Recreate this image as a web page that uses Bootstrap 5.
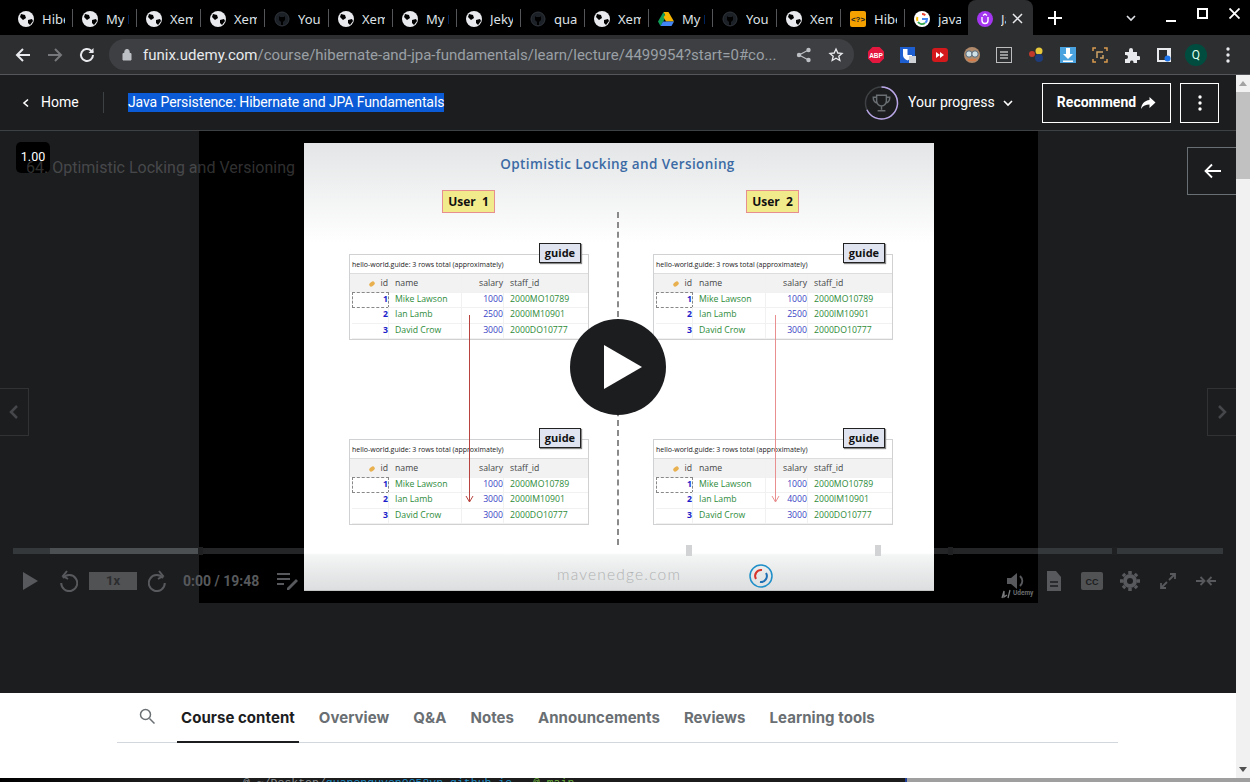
<!DOCTYPE html>
<html lang="en">
<head>
  <meta charset="UTF-8">
  <title>Java Persistence: Hibernate and JPA Fundamentals</title>
  <link rel="stylesheet" href="https://cdn.jsdelivr.net/npm/bootstrap@5.3.0/dist/css/bootstrap.min.css">
  <style>
    html, body { height: 782px; overflow: hidden; }
    body { background: #000; font-family: Roboto, "Liberation Sans", sans-serif; }
    svg { display: block; flex: none; }

    /* browser chrome */
    .tab-strip { height: 35px; background: #000; padding-left: 9px; }
    .tab-item { width: 64px; height: 35px; padding-left: 9px; padding-top: 2px; color: #dee1e6; font: 13px "Noto Sans", sans-serif; background: linear-gradient(#55565a, #55565a) right 50% / 1px 18px no-repeat; overflow: hidden; white-space: nowrap; }
    .tab-item:nth-child(15) { background: none; }
    .tab-item span { width: 23px; margin-left: 8px; overflow: hidden; }
    .tab-item.tab-current { background: #2d2e30; border-radius: 8px 8px 0 0; margin-left: -1px; width: 65px; }
    .tab-item.tab-current span { width: 5px; }
    .tab-x { margin-left: 6px; }
    .tab-plus { margin-left: 15px; }
    .win-btns { margin-left: auto; color: #fff; }
    .win-min { margin-left: 29px; }
    .win-max { margin: 0 0 8px 21px; }
    .win-close { margin: 0 10px 8px 21px; }
    .tool-bar { height: 40px; background: #2d2e30; border-bottom: 1px solid #55565a; padding-left: 14px; }
    .nav-ico { width: 18px; margin-right: 14px; }
    .nav-ico.nav-last { margin-right: 13px; }
    .omni { width: 745px; height: 31px; background: #3e3f42; border-radius: 16px; padding: 0 10px 0 13px; font: 15px Roboto, sans-serif; color: #9aa0a6; white-space: nowrap; }
    .omni b { font-weight: 400; color: #e8eaed; }
    .omni-lock { margin-right: 11px; }
    .ext-row { margin-left: 6px; }
    .ext-slot { width: 32px; display: flex; justify-content: center; }
    .avatar-q { width: 22px; height: 22px; border-radius: 50%; background: #004d40; color: #dfe; font-size: 12px; display: flex; align-items: center; justify-content: center; }

    /* page area + scrollbar */
    .page-wrap { height: 703px; }
    .page-main { width: 1236px; }
    .scroll-rail { width: 14px; background: #f1f1f1; position: relative; padding: 6px 0; }
    .scroll-thumb { position: absolute; top: 17px; left: 0; width: 100%; height: 87px; background: #c1c1c1; }
    .scroll-up { width: 0; height: 0; border: 4px solid transparent; border-top: 0; border-bottom: 5px solid #a3a3a3; }
    .scroll-down { width: 0; height: 0; border: 4px solid transparent; border-bottom: 0; border-top: 5px solid #505050; }

    .course-head { height: 56px; background: #1c1d1f; border-bottom: 1px solid #3e4143; padding-left: 21px; color: #fff; font-size: 14px; }
    .home-link { width: 82px; gap: 10px; }
    .head-rule { width: 1px; height: 21px; background: #3e4143; margin-right: 24px; }
    .sel-title { background: #0b5bd6; line-height: 19px; white-space: nowrap; letter-spacing: -.1px; }
    .head-end { margin-left: auto; padding-right: 17px; }
    .ring-ico { margin-left: 1px; }
    .prog-label { width: 87px; margin: 0 7px 0 9px; white-space: nowrap; }
    .outline-sq { height: 40px; border: 1px solid #fff; display: flex; align-items: center; justify-content: center; font-weight: 700; }
    .btn-rec { width: 129px; margin-left: 28px; gap: 4px; }
    .btn-more { width: 39px; margin-left: 9px; }

    /* player */
    .player { height: 562px; background: #1c1d1f; position: relative; overflow: hidden; }
    .video-box { position: absolute; left: 199px; top: 0; width: 839px; height: 472px; background: #000; }
    .slide { position: absolute; left: 304px; top: 12px; width: 630px; height: 448px; background: linear-gradient(#e3e5e6 0, #fff 100px, #fff 410px, #f4f5f5 412px, #dcdedf 447px, #aaa 448px); font-family: "Open Sans", sans-serif; }
    .slide-title { position: absolute; left: 0; right: 0; top: 11px; padding-right: 3px; text-align: center; color: #3b6aa5; font-size: 13.5px; font-weight: 600; letter-spacing: .4px; line-height: 20px; }
    .user-tag { position: absolute; top: 47px; width: 53px; height: 23px; background: #f2eb8b; border: 1px solid #e78f8f; color: #111; font-size: 12px; font-weight: 700; display: flex; align-items: center; justify-content: center; }
    .user-a { left: 138px; }
    .user-b { left: 442px; }
    .grid-box { position: absolute; width: 240px; height: 86px; background: #fff; border: 1px solid #cfd1d3; color: #222; font-size: 8.7px; }
    .grid-cap { height: 18px; line-height: 19px; padding-left: 2px; white-space: nowrap; font-size: 7px; }
    .grid-line { display: grid; grid-template-columns: 37px 73px 42px 1fr; height: 15.4px; line-height: 15.4px; padding-left: 2px; }
    .grid-line div { border-right: 1px solid #f1f1f1; border-bottom: 1px solid #f1f1f1; }
    .grid-line.grid-hd { height: 19px; line-height: 18px; background: #f2f2f3; color: #444; border-top: 1px solid #ddd; }
    .grid-line div:nth-child(1), .grid-line div:nth-child(3) { text-align: right; }
    .grid-line div:nth-child(2), .grid-line div:nth-child(4) { padding-left: 6px; }
    .grid-line div:nth-child(4) { border-right: 0; }
    .cell-n { color: #1c1ec9; font-weight: 700; }
    .cell-focus { border: 1px dashed #888 !important; line-height: 13px; }
    .cell-g { color: #2e8b3a; }
    .cell-b { color: #3a3fc4; }
    .key-dot { display: inline-block; width: 6px; height: 4px; margin-right: 5px; border-radius: 2px; background: #e8b04e; transform: rotate(-35deg); }
    .guide-tag { position: absolute; top: -12px; right: 7px; width: 42px; height: 20px; background: #dfe4f0; border: 1px solid #222; box-shadow: 1px 1px 1px #888; color: #111; font-weight: 700; font-size: 11px; display: flex; align-items: center; justify-content: center; }
    .mid-dash { position: absolute; left: 313px; top: 69px; height: 333px; border-left: 2px dashed #8a8a8a; }
    .red-arrow { position: absolute; top: 172px; }
    .brand-text { position: absolute; left: 253px; top: 420px; color: #b0b2b3; font-size: 15.5px; font-weight: 300; letter-spacing: 1.2px; font-family: Lato, sans-serif; }
    .slide-logo { position: absolute; left: 445px; top: 421px; }

    .speed-chip { position: absolute; left: 16px; top: 11px; width: 34px; height: 31px; border-radius: 5px; background: #000; color: #fff; font-size: 12.5px; text-align: center; line-height: 30px; }
    .lec-name { position: absolute; left: 26px; top: 25px; color: rgba(255,255,255,.2); font-size: 16px; white-space: nowrap; }
    .side-btn { position: absolute; border: 1px solid #303234; display: flex; align-items: center; justify-content: center; }
    .side-prev { left: -1px; top: 257px; width: 30px; height: 48px; }
    .side-next { right: -1px; top: 257px; width: 30px; height: 48px; }
    .side-back { right: -2px; top: 16px; width: 51px; height: 48px; border-color: #6a6f73; }
    .big-play { position: absolute; left: 570px; top: 188px; width: 96px; height: 96px; border-radius: 50%; background: #1c1d1f; display: flex; align-items: center; justify-content: center; }
    .big-play svg { margin-left: 10px; }
    .seek-bar { position: absolute; left: 13px; top: 417px; width: 1210px; height: 6px; background: rgba(106,111,115,.33); }
    .seek-load { position: absolute; left: 37px; top: 0; width: 150px; height: 100%; background: rgba(106,111,115,.45); }
    .seek-mark { position: absolute; top: -1px; width: 5px; height: 8px; background: #1f2021; }
    .seek-over { position: absolute; left: 13px; top: 417px; }
    .seek-mark.on-white { top: -3px; width: 6px; height: 11px; background: #d2d3d4; }
    .ctrl-row { position: absolute; left: 0; right: 0; top: 437px; height: 26px; padding: 0 11px 0 21px; color: #57595c; }
    .ctrl-replay { margin-left: 19px; }
    .ctrl-rate { width: 48px; height: 18px; background: #505254; color: #2c2d2f; font-size: 13px; font-weight: 700; text-align: center; line-height: 18px; margin: 0 11px; }
    .ctrl-time { font-size: 14px; font-weight: 700; white-space: nowrap; margin-left: 15px; width: 77px; }
    .ctrl-notes { margin-left: 16px; }
    .ctrl-slot { width: 38px; display: flex; justify-content: center; }
    .udemy-mark { position: absolute; left: 1001px; top: 458px; gap: 2px; color: #6a6c6e; font-size: 6.5px; font-weight: 700; }

    /* lower tabs */
    .tab-panel { height: 85px; background: #fff; padding: 0 117px; }
    .tab-row { height: 50px; border-bottom: 1px solid #d1d7dc; width: 1001px; }
    .tab-find { width: 60px; padding-left: 22px; margin-bottom: 3px; }
    .tab-link { padding: 0 4px; height: 50px; margin-right: 16px; line-height: 49px; color: #6a6f73; font-family: Inter, sans-serif; font-weight: 700; font-size: 15px; letter-spacing: .05px; white-space: nowrap; }
    .tab-link.tab-on { color: #1c1d1f; border-bottom: 2px solid #1c1d1f; }

    /* strip of the desktop below the window */
    .desk-peek { height: 4px; background: linear-gradient(90deg, #000 0, #1c1c1c 150px, #1c1c1c 905px, #1f3f9a 905px, #1f3f9a 907px, #9f9f9f 907px); overflow: hidden; font: 11.5px/10px "Liberation Mono", monospace; color: #8a8f93; padding-left: 243px; white-space: pre; }
    .term-path { color: #1f8fc9; }
    .term-branch { color: #6cb33f; }
  </style>
</head>
<body>

<div class="tab-strip d-flex align-items-center" id="tabs"></div>

<div class="tool-bar d-flex align-items-center">
  <svg class="nav-ico" viewBox="0 0 18 18" height="18" fill="none" stroke="#e8eaed" stroke-width="2"><path d="M16 9H3M9 3 3 9l6 6"/></svg>
  <svg class="nav-ico" viewBox="0 0 18 18" height="18" fill="none" stroke="#77787b" stroke-width="2"><path d="M2 9h13M9 3l6 6-6 6"/></svg>
  <svg class="nav-ico nav-last" viewBox="0 0 18 18" height="18" fill="none" stroke="#e8eaed" stroke-width="2"><path d="M15 9a6 6 0 1 1-1.800-4.300L15 6.500"/><path d="M15.500 2v5h-5" fill="#e8eaed" stroke="none"/></svg>
  <div class="omni d-flex align-items-center">
    <svg width="10" height="13" viewBox="0 0 10 13" class="omni-lock"><path d="M1 5.500h8V12H1zM2.800 5.500V3.600a2.200 2.200 0 0 1 4.400 0v1.900" fill="#bdc1c6" stroke="#bdc1c6"/></svg>
    <span><b>funix.udemy.com</b>/course/hibernate-and-jpa-fundamentals/learn/lecture/4499954?start=0#co...</span>
    <svg class="ms-auto me-3" width="16" height="16" viewBox="0 0 16 16" fill="#bdc1c6"><circle cx="12.500" cy="3" r="2.200"/><circle cx="12.500" cy="13" r="2.200"/><circle cx="3" cy="8" r="2.200"/><path d="M3 8l9.500-5M3 8l9.500 5" stroke="#bdc1c6" stroke-width="1.200"/></svg>
    <svg width="16" height="16" viewBox="0 0 24 24" fill="none" stroke="#e8eaed" stroke-width="2"><path d="m12 3 2.700 6 6.300.6-4.800 4.200 1.500 6.400L12 16.800l-5.700 3.400 1.500-6.400L3 9.600 9.300 9z"/></svg>
  </div>
  <div class="ext-row d-flex align-items-center">
    <div class="ext-slot"><svg width="18" height="18" viewBox="0 0 18 18"><path d="M5.500 1h7L17 5.500v7L12.500 17h-7L1 12.500v-7z" fill="#e4173e"/><text x="9" y="11.500" font-size="6.500" font-weight="700" text-anchor="middle" fill="#fff" font-family="Liberation Sans">ABP</text></svg></div>
    <div class="ext-slot"><svg width="18" height="18" viewBox="0 0 18 18"><rect x="1" y="1" width="15" height="16" fill="#1d5fd0"/><path d="M4 3h9v6c0 3-2.500 4.500-4.500 5.500C6.500 13.500 4 12 4 9z" fill="#fff"/><path d="M8.500 3h4.500v6H8.500z" fill="#1d5fd0"/><rect x="10" y="10" width="7" height="7" fill="#cfd2d6"/></svg></div>
    <div class="ext-slot"><svg width="16" height="14" viewBox="0 0 16 14"><rect width="16" height="14" rx="3" fill="#d3191c"/><path d="M4 4l4 3-4 3zM8 4l4 3-4 3z" fill="#fff"/></svg></div>
    <div class="ext-slot"><svg width="18" height="18" viewBox="0 0 18 18"><circle cx="9" cy="9" r="8" fill="#b08a6a"/><circle cx="6" cy="8" r="3.200" fill="#cfe0e6" stroke="#567"/><circle cx="12" cy="8" r="3.200" fill="#cfe0e6" stroke="#567"/><path d="M5 14h8" stroke="#d67a4a" stroke-width="2"/></svg></div>
    <div class="ext-slot"><svg width="16" height="16" viewBox="0 0 16 16" fill="none" stroke="#bdbdbd"><rect x=".5" y=".5" width="15" height="15"/><path d="M4 5h8M4 8h8M4 11h8" stroke-width="1.500"/></svg></div>
    <div class="ext-slot"><svg width="16" height="16" viewBox="0 0 16 16"><circle cx="4" cy="7" r="3" fill="#c0392b"/><circle cx="11" cy="4" r="3.500" fill="#e8c93c"/><circle cx="11" cy="11" r="4" fill="#1f3c78"/></svg></div>
    <div class="ext-slot"><svg width="16" height="16" viewBox="0 0 16 16"><rect width="16" height="16" fill="#4aa3df"/><path d="M6 1h4v6h3l-5 5-5-5h3zM3 13.500h10V15H3z" fill="#fff"/></svg></div>
    <div class="ext-slot"><svg width="16" height="16" viewBox="0 0 16 16" fill="none" stroke="#d79a4e" stroke-width="1.500"><path d="M1 4V1h3M12 1h3v3M15 12v3h-3M4 15H1v-3"/><path d="M5 11V5h6M11 8v3H8" stroke="#cfa466"/></svg></div>
    <div class="ext-slot"><svg width="16" height="16" viewBox="0 0 16 16" fill="#e8eaed"><path d="M1 5h4V3a2 2 0 0 1 4 0v2h4v4h1.500a2 2 0 0 1 0 4H13v3H9.500v-1a1.800 1.800 0 0 0-3.500 0v1H1v-4h1a2 2 0 0 0 0-4H1z"/></svg></div>
    <div class="ext-slot"><svg width="16" height="16" viewBox="0 0 16 16"><rect x="1" y="1" width="14" height="14" fill="#e8eaed"/><rect x="3" y="3" width="8" height="10" fill="#2d2e30"/><circle cx="11.500" cy="11.500" r="3" fill="#1a73e8"/></svg></div>
    <div class="ext-slot"><div class="avatar-q">Q</div></div>
    <div class="ext-slot"><svg width="4" height="16" viewBox="0 0 4 16" fill="#e8eaed"><circle cx="2" cy="2" r="1.700"/><circle cx="2" cy="8" r="1.700"/><circle cx="2" cy="14" r="1.700"/></svg></div>
  </div>
</div>

<div class="page-wrap d-flex">
  <div class="page-main">
    <div class="course-head d-flex align-items-center">
      <div class="home-link d-flex align-items-center">
        <svg width="10" height="10" viewBox="0 0 10 10" fill="none" stroke="#fff" stroke-width="1.600"><path d="M7 1.500 3 5l4 3.500"/></svg>
        <span>Home</span>
      </div>
      <div class="head-rule"></div>
      <span class="sel-title">Java Persistence: Hibernate and JPA Fundamentals</span>
      <div class="head-end d-flex align-items-center">
        <svg class="ring-ico" width="35" height="36" viewBox="0 0 36 36" fill="none"><circle cx="18" cy="18" r="16.500" stroke="#3e4143" stroke-width="1.500"/><path d="M18 1.500A16.500 16.500 0 1 1 3 25" stroke="#b9a6e8" stroke-width="1.500"/><path d="M13 10h10v6a5 5 0 0 1-10 0zM13 12H9.500c0 4 2 5.500 4 6M23 12h3.500c0 4-2 5.500-4 6M18 21v4M14 26h8" stroke="#6a6f73" stroke-width="1.500"/></svg>
        <span class="prog-label">Your progress</span>
        <svg width="12" height="12" viewBox="0 0 12 12" fill="none" stroke="#fff" stroke-width="1.600"><path d="M2 4l4 4 4-4"/></svg>
        <div class="outline-sq btn-rec"><span>Recommend</span><svg width="16" height="14" viewBox="0 0 16 14" fill="#fff"><path d="M9.500 1 15.500 6.500 9.500 12V8.500C6 8.500 3 9.500 1 13 1.500 8 4.500 4.500 9.500 4z"/></svg></div>
        <div class="outline-sq btn-more"><svg width="4" height="16" viewBox="0 0 4 16" fill="#fff"><circle cx="2" cy="2" r="1.700"/><circle cx="2" cy="8" r="1.700"/><circle cx="2" cy="14" r="1.700"/></svg></div>
      </div>
    </div>

    <div class="player">
      <div class="video-box"></div>

      <div class="speed-chip">1.00</div>
      <div class="lec-name">64. Optimistic Locking and Versioning</div>
      <div class="side-btn side-back"><svg width="18" height="16" viewBox="0 0 18 16" fill="none" stroke="#fff" stroke-width="1.800"><path d="M17 8H2M8 1.500 1.500 8 8 14.500"/></svg></div>
      <div class="side-btn side-prev"><svg width="10" height="16" viewBox="0 0 10 16" fill="none" stroke="#45474a" stroke-width="2.500"><path d="M8 2 2 8l6 6"/></svg></div>
      <div class="side-btn side-next"><svg width="10" height="16" viewBox="0 0 10 16" fill="none" stroke="#45474a" stroke-width="2.500"><path d="m2 2 6 6-6 6"/></svg></div>

      <div class="seek-bar">
        <div class="seek-load"></div>
        <div class="seek-mark" style="left:185px"></div>
        <div class="seek-mark" style="left:935px"></div>
        <div class="seek-mark" style="left:1099px"></div>
      </div>

      <div class="ctrl-row d-flex align-items-center">
        <svg width="18" height="20" viewBox="0 0 18 20" fill="#57595c"><path d="M2 1l15 9-15 9z"/></svg>
        <svg class="ctrl-replay" width="20" height="22" viewBox="0 0 20 22" fill="none" stroke="#57595c" stroke-width="2"><path d="M5 8a8 8 0 1 1-1.800 5"/><path d="M9 1 5 6l5 3"/></svg>
        <div class="ctrl-rate">1x</div>
        <svg width="20" height="22" viewBox="0 0 20 22" fill="none" stroke="#57595c" stroke-width="2"><path d="M15 8a8 8 0 1 0 1.800 5"/><path d="M11 1l4 5-5 3"/></svg>
        <div class="ctrl-time">0:00 / 19:48</div>
        <svg class="ctrl-notes" width="22" height="20" viewBox="0 0 22 20" fill="#57595c"><rect x="1" y="2" width="13" height="2"/><rect x="1" y="7" width="13" height="2"/><rect x="1" y="12" width="7" height="2"/><path d="M11 17l9-9 2 2-9 9h-2z"/></svg>
        <div class="d-flex align-items-center ms-auto">
          <div class="ctrl-slot"><svg width="20" height="20" viewBox="0 0 20 20" fill="#57595c"><path d="M1 7h4l6-5v16l-6-5H1z"/><path d="M14 5c3 3 3 7 0 10" fill="none" stroke="#57595c" stroke-width="2"/></svg></div>
          <div class="ctrl-slot"><svg width="16" height="20" viewBox="0 0 16 20" fill="#57595c"><path d="M1 0h9l5 6v14H1z"/><path d="M4 11h8M4 15h8" stroke="#1c1d1f" stroke-width="1.500"/></svg></div>
          <div class="ctrl-slot"><svg width="22" height="18" viewBox="0 0 22 18"><rect width="22" height="18" rx="2" fill="#505254"/><text x="11" y="12.500" text-anchor="middle" font-size="9" font-weight="700" fill="#1c1d1f" font-family="Liberation Sans">CC</text></svg></div>
          <div class="ctrl-slot"><svg width="20" height="20" viewBox="0 0 20 20" fill="none" stroke="#57595c"><circle cx="10" cy="10" r="5" stroke-width="4"/><path d="M10 0v3M10 17v3M0 10h3M17 10h3M3 3l2 2M15 15l2 2M17 3l-2 2M5 15l-2 2" stroke-width="3.500"/></svg></div>
          <div class="ctrl-slot"><svg width="18" height="18" viewBox="0 0 18 18" fill="none" stroke="#57595c" stroke-width="1.800"><path d="M2 16 8 10M2 11v5h5M16 2l-6 6M11 2h5v5"/></svg></div>
          <div class="ctrl-slot"><svg width="20" height="12" viewBox="0 0 20 12" fill="none" stroke="#57595c" stroke-width="1.800"><path d="M0 6h8M4.500 2 8.500 6l-4 4M20 6h-8M15.500 2l-4 4 4 4"/></svg></div>
        </div>
      </div>
      <div class="udemy-mark d-flex align-items-center">
        <svg width="10" height="10" viewBox="0 0 10 10" fill="none" stroke="#7a7c7e" stroke-width="1.300"><path d="M1 9 3 2 3 8 6 6M9 1 7 9"/></svg>
        <span>Udemy</span>
      </div>

      <div class="slide" id="slide">
        <div class="slide-title">Optimistic Locking and Versioning</div>
        <div class="user-tag user-a">User&nbsp;&nbsp;1</div>
        <div class="user-tag user-b">User&nbsp;&nbsp;2</div>
        <div class="mid-dash"></div>
        <div class="brand-text">mavenedge.com</div>
        <svg class="slide-logo" width="24" height="24" viewBox="0 0 24 24" fill="none"><circle cx="12" cy="12" r="11" stroke="#1f8fc9" stroke-width="1.500"/><path d="M7 15a6 6 0 0 1 6-9" stroke="#d8342b" stroke-width="2"/><path d="M17 9a6 6 0 0 1-6 9" stroke="#1f6fb5" stroke-width="2"/></svg>
      </div>

      <div class="seek-over">
        <div class="seek-mark on-white" style="left:673px"></div>
        <div class="seek-mark on-white" style="left:862px"></div>
      </div>

      <div class="big-play"><svg width="38" height="44" viewBox="0 0 38 44" fill="#fff"><path d="M0 0l38 22L0 44z"/></svg></div>
    </div>

    <div class="tab-panel">
      <div class="tab-row d-flex align-items-center">
        <div class="tab-find"><svg width="16" height="16" viewBox="0 0 16 16" fill="none" stroke="#6a6f73" stroke-width="1.500"><circle cx="6.500" cy="6.500" r="5"/><path d="m10.500 10.500 5 5"/></svg></div>
        <div class="tab-link tab-on">Course content</div>
        <div class="tab-link">Overview</div>
        <div class="tab-link">Q&amp;A</div>
        <div class="tab-link">Notes</div>
        <div class="tab-link">Announcements</div>
        <div class="tab-link">Reviews</div>
        <div class="tab-link">Learning tools</div>
      </div>
    </div>
  </div>
  <div class="scroll-rail d-flex flex-column justify-content-between align-items-center"><div class="scroll-up"></div><div class="scroll-thumb"></div><div class="scroll-down"></div></div>
</div>
<div class="desk-peek">@ ~/Desktop/<span class="term-path">quanenguyen0058vn.github.io</span>  <span class="term-branch"> @ main</span></div>

<script>
const globe = '<svg width="16" height="16" viewBox="0 0 16 16"><circle cx="8" cy="8" r="8" fill="#e8eaed"/><path d="M3 3l4 1 1 3-3 2-3-3zM10 9l4-1 1 2-3 4-2-2z" fill="#000"/></svg>';
const cat = '<svg width="16" height="16" viewBox="0 0 16 16"><circle cx="8" cy="8" r="7" fill="#1c2128" stroke="#2f343a"/><path d="M5 5l1 1h4l1-1v4l-2 2v3H7v-3L5 9z" fill="#000"/></svg>';
const drive = '<svg width="16" height="16" viewBox="0 0 16 16"><path d="M5.500 1h5L8 6z" fill="#f4b400"/><path d="M5.500 1 0 10.500 2.500 15 8 6z" fill="#0f9d58"/><path d="M10.500 1 16 10.500H8L5.500 6z" fill="#f4b400"/><path d="M2.500 15h11l2.500-4.500H5z" fill="#4285f4"/></svg>';
const hib = '<svg width="16" height="16" viewBox="0 0 16 16"><rect width="16" height="16" rx="2" fill="#f5a100"/><text x="8" y="11" font-size="8" font-weight="700" text-anchor="middle" fill="#222" font-family="Liberation Sans">&lt;?&gt;</text></svg>';
const goog = '<svg width="16" height="16" viewBox="0 0 16 16"><circle cx="8" cy="8" r="8" fill="#fff"/><path d="M8 3a5 5 0 0 1 3.300 1.200" fill="none" stroke="#ea4335" stroke-width="2"/><path d="M3.500 6a5 5 0 0 0 0 4" fill="none" stroke="#fbbc05" stroke-width="2"/><path d="M4 11a5 5 0 0 0 7 1" fill="none" stroke="#34a853" stroke-width="2"/><path d="M8 8h5c0 1.500-.6 3-1.700 3.800" fill="none" stroke="#4285f4" stroke-width="2"/></svg>';
const ud = '<svg width="16" height="16" viewBox="0 0 16 16"><circle cx="8" cy="8" r="8" fill="#a435f0"/><path d="M5 6v3.500a3 3 0 0 0 6 0V6M6 4.500 8 3l2 1.500" fill="none" stroke="#fff" stroke-width="1.400"/></svg>';
const tabList = [
  [globe, 'Hibernate'], [globe, 'My Portal'], [globe, 'Xem bài'], [globe, 'Xem bài'], [cat, 'Your repo'],
  [globe, 'Xem bài'], [globe, 'My Portal'], [globe, 'Jekyll'], [cat, 'quanen'], [globe, 'Xem bài'],
  [drive, 'My Drive'], [cat, 'Your repo'], [globe, 'Xem bài'], [hib, 'Hibernate'], [goog, 'java']
];
let tabHtml = '';
tabList.forEach(t => {
  tabHtml += `<div class="tab-item d-flex align-items-center">${t[0]}<span>${t[1]}</span></div>`;
});
tabHtml += `<div class="tab-item tab-current d-flex align-items-center">${ud}<span>Java</span>
  <svg class="tab-x" width="11" height="11" viewBox="0 0 11 11" stroke="#e8eaed" stroke-width="1.500"><path d="M1 1l9 9M10 1l-9 9"/></svg></div>
  <svg class="tab-plus" width="14" height="14" viewBox="0 0 14 14" stroke="#fff" stroke-width="2"><path d="M7 0v14M0 7h14"/></svg>
  <div class="win-btns d-flex align-items-center">
    <svg width="12" height="12" viewBox="0 0 12 12" fill="none" stroke="#dee1e6" stroke-width="1.600"><path d="M2 4l4 4 4-4"/></svg>
    <svg class="win-min" width="10" height="10" viewBox="0 0 10 10" stroke="#fff" stroke-width="2"><path d="M0 8h10"/></svg>
    <svg class="win-max" width="11" height="11" viewBox="0 0 11 11" fill="none" stroke="#fff" stroke-width="2"><rect x="1" y="1" width="9" height="9"/></svg>
    <svg class="win-close" width="11" height="11" viewBox="0 0 11 11" stroke="#fff" stroke-width="1.800"><path d="M.5.500l10 10M10.500.500l-10 10"/></svg>
  </div>`;
document.getElementById('tabs').innerHTML = tabHtml;

// the four result grids on the slide: [left, top, salary of Ian Lamb]
const grids = [[45, 111, 2500], [349, 111, 2500], [45, 296, 3000], [349, 296, 4000]];
const slide = document.getElementById('slide');
grids.forEach(g => {
  const box = document.createElement('div');
  box.className = 'grid-box';
  box.style.left = g[0] + 'px';
  box.style.top = g[1] + 'px';
  box.innerHTML = `
    <div class="guide-tag">guide</div>
    <div class="grid-cap">hello-world.guide: 3 rows total (approximately)</div>
    <div class="grid-line grid-hd"><div><i class="key-dot"></i>id</div><div>name</div><div>salary</div><div>staff_id</div></div>
    <div class="grid-line"><div class="cell-n cell-focus">1</div><div class="cell-g">Mike Lawson</div><div class="cell-b">1000</div><div class="cell-g">2000MO10789</div></div>
    <div class="grid-line"><div class="cell-n">2</div><div class="cell-g">Ian Lamb</div><div class="cell-b">${g[2]}</div><div class="cell-g">2000IM10901</div></div>
    <div class="grid-line"><div class="cell-n">3</div><div class="cell-g">David Crow</div><div class="cell-b">3000</div><div class="cell-g">2000DO10777</div></div>`;
  slide.appendChild(box);
});
// red arrows between the grids: [left, colour]
[[161, '#b8433f'], [467, '#ea8f8f']].forEach(a => {
  slide.insertAdjacentHTML('beforeend', `<svg class="red-arrow" style="left:${a[0]}px" width="9" height="188" viewBox="0 0 9 188" fill="none" stroke="${a[1]}"><path d="M4.500 0v187M1 181l3.500 6 3.500-6"/></svg>`);
});
</script>
<script src="https://cdn.jsdelivr.net/npm/bootstrap@5.3.0/dist/js/bootstrap.bundle.min.js"></script>
</body>
</html>
